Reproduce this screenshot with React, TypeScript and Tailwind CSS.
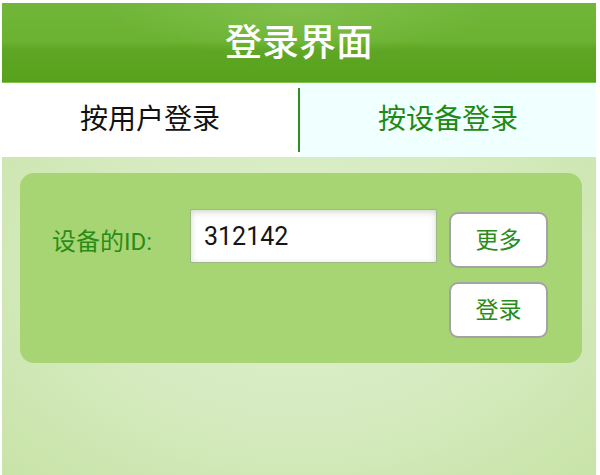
import React from "react";

const cjk = "font-['Roboto','Noto_Sans_CJK_SC',sans-serif]";

export default function App() {
  return (
    <div className={`w-[600px] h-[475px] bg-white pt-[3px] pl-[2px] pr-[4px] overflow-hidden ${cjk}`}>
      <div className="flex h-[472px] flex-col">
        <div className="relative flex h-[80px] items-center justify-center bg-[linear-gradient(180deg,#71b63a_0%,#6ab230_48%,#5ea624_58%,#57a21d_100%)]">
          <div className="absolute inset-0 bg-[radial-gradient(ellipse_at_50%_10%,rgba(160,210,110,0.35)_0%,rgba(160,210,110,0)_45%)]" />
          <div className="absolute inset-x-0 bottom-0 h-[1px] bg-[#7fc24c]" />
          <span className="relative text-[37px] font-medium leading-none text-white">登录界面</span>
        </div>
        <div className="flex h-[74px]">
          <div className="flex flex-1 items-center justify-center bg-white text-[28px] leading-none text-[#111]">
            按用户登录
          </div>
          <div className="my-[5px] w-[2px] bg-[#2f8f1f]" />
          <div className="flex flex-1 items-center justify-center bg-[#f0ffff] text-[28px] leading-none text-[#1e8a14]">
            按设备登录
          </div>
        </div>
        <div className="flex-1 bg-[radial-gradient(ellipse_at_50%_35%,#e0f0ce_0%,#d6ebc0_50%,#c8e3a8_100%)] pt-[16px]">
          <div className="ml-[18px] mr-[14px] flex h-[190px] rounded-[14px] bg-[#a8d573] pl-[32px] pt-[36px]">
            <div className="mt-[6px] flex h-[54px] w-[138px] items-center text-[24px] leading-none text-[#2a8c18]">
              设备的ID:
            </div>
            <div className="flex h-[54px] w-[247px] items-center border border-[#9dba86] bg-white pl-[13px] text-[25px] leading-none text-[#151515] shadow-[inset_0_2px_6px_rgba(120,140,100,0.35)]">
              312142
            </div>
            <div className="ml-[12px] mt-[3px] flex flex-col gap-[14px]">
              <div className="flex h-[56px] w-[99px] items-center justify-center rounded-[9px] border-2 border-[#a3a3a3] bg-white text-[23px] leading-none text-[#2a8c18]">
                更多
              </div>
              <div className="flex h-[56px] w-[99px] items-center justify-center rounded-[9px] border-2 border-[#a3a3a3] bg-white text-[23px] leading-none text-[#2a8c18]">
                登录
              </div>
            </div>
          </div>
        </div>
      </div>
    </div>
  );
}
